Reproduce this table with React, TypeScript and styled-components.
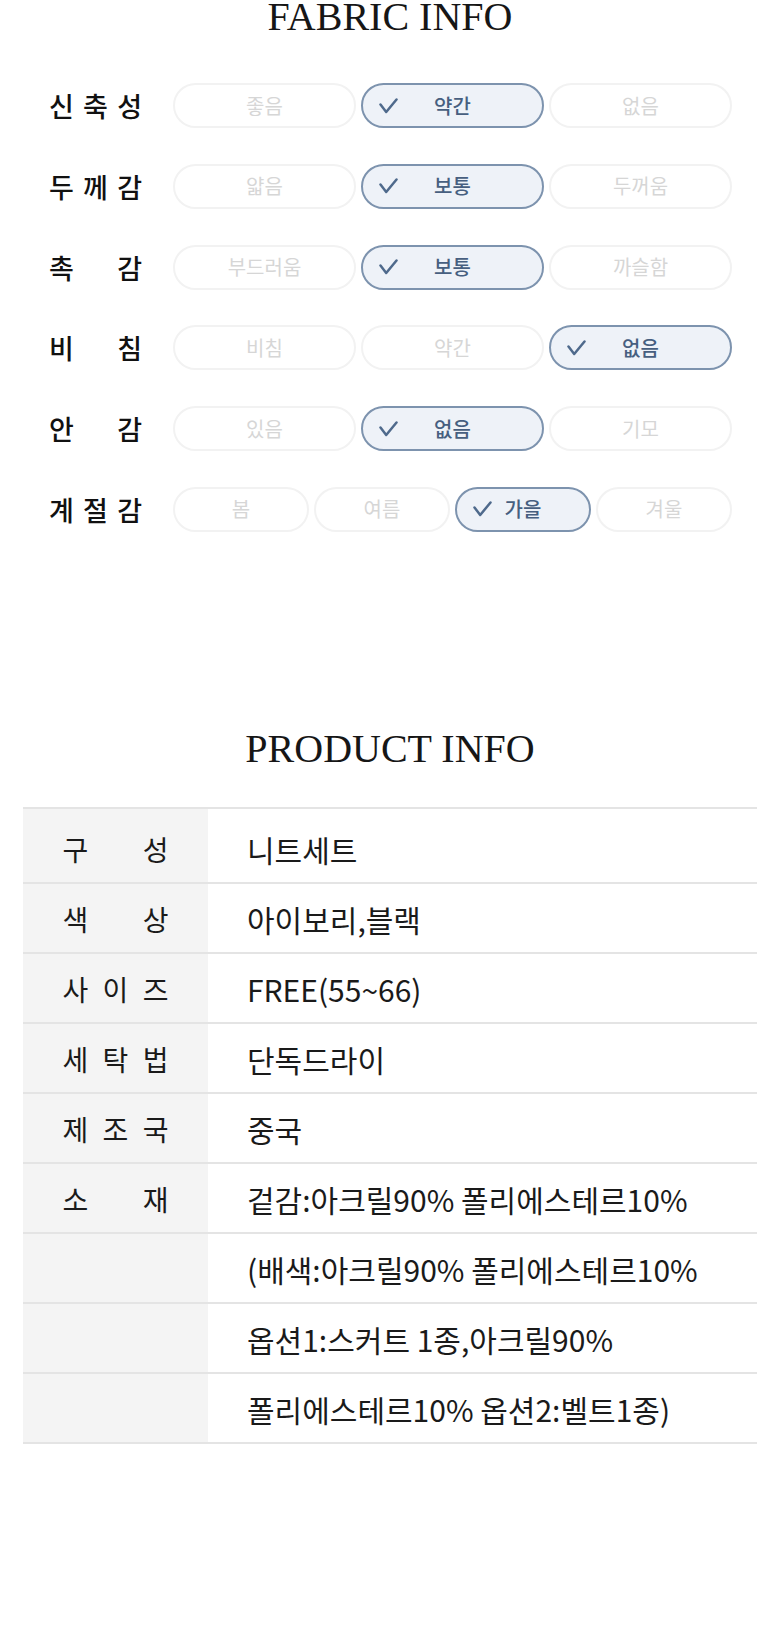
import React from "react";
import styled, { createGlobalStyle } from "styled-components";

const GlobalStyle = createGlobalStyle`
  html, body {
    margin: 0;
    padding: 0;
    background: #ffffff;
  }
  body {
    font-family: "Noto Sans CJK KR", "Noto Sans", sans-serif;
    color: #111;
  }
  * { box-sizing: border-box; }
`;

const Page = styled.div`
  width: 780px;
  min-height: 1631px;
  display: flex;
  flex-direction: column;
  align-items: stretch;
`;

const SectionTitle = styled.h2<{ $top: number }>`
  margin: ${(p) => p.$top}px 0 0;
  font-family: "Liberation Serif", "DejaVu Serif", serif;
  font-weight: 400;
  font-size: 40px;
  line-height: 34px;
  text-align: center;
  color: #161616;
  letter-spacing: 0;
`;

const FabricList = styled.div`
  margin-top: 49px;
  padding: 0 48px 0 49px;
  display: flex;
  flex-direction: column;
  gap: 35.8px;
`;

const FabricRow = styled.div`
  display: grid;
  grid-template-columns: 93px 1fr;
  column-gap: 31px;
  align-items: center;
  height: 45px;
`;

const SpreadLabel = styled.div<{ $size: number; $weight: number; $color: string }>`
  display: flex;
  justify-content: space-between;
  font-size: ${(p) => p.$size}px;
  font-weight: ${(p) => p.$weight};
  color: ${(p) => p.$color};
  line-height: 1;
`;

const Options = styled.div<{ $count: number }>`
  display: grid;
  grid-template-columns: repeat(${(p) => p.$count}, 1fr);
  gap: 5px;
  height: 45px;
`;

const Pill = styled.div<{ $active: boolean }>`
  display: grid;
  grid-template-columns: 1fr auto 1fr;
  align-items: center;
  padding: 0 16px;
  height: 45px;
  border-radius: 23px;
  border: 2px solid ${(p) => (p.$active ? "#7d93ae" : "#f2f2f2")};
  background: ${(p) => (p.$active ? "#eef2f8" : "#ffffff")};
  color: ${(p) => (p.$active ? "#475f80" : "#d6d6d6")};
  font-size: 20px;
  font-weight: ${(p) => (p.$active ? 500 : 400)};
  line-height: 1;
`;

const CheckSlot = styled.span`
  justify-self: start;
  display: flex;
  align-items: center;
`;

const PillText = styled.span`
  white-space: nowrap;
`;

const Table = styled.div`
  margin: 41px 23px 0;
  border-top: 2px solid #e4e4e4;
  display: flex;
  flex-direction: column;
`;

const TRow = styled.div<{ $first?: boolean }>`
  display: grid;
  grid-template-columns: 185px 1fr;
  border-bottom: 2px solid #e4e4e4;
  min-height: ${(p) => (p.$first ? 75 : 70)}px;
`;

const THead = styled.div<{ $first?: boolean }>`
  background: #f4f4f4;
  display: flex;
  align-items: center;
  justify-content: center;
  padding-top: ${(p) => (p.$first ? 7 : 3)}px;
`;

const HeadInner = styled.div`
  width: 106px;
`;

const TCell = styled.div<{ $first?: boolean }>`
  display: flex;
  align-items: center;
  padding: ${(p) => (p.$first ? 7 : 3)}px 0 0 39px;
  font-size: 30px;
  font-weight: 400;
  color: #1a1a1a;
  line-height: 1;
  white-space: nowrap;
`;

const Check = () => (
  <svg width="19" height="16" viewBox="0 0 19 16" fill="none">
    <path
      d="M1.5 6.5 L7.2 14 L17.5 1.5"
      stroke="#4f6a8c"
      strokeWidth="2.5"
      strokeLinecap="round"
      strokeLinejoin="round"
    />
  </svg>
);

const fabric = [
  { label: "신축성", options: ["좋음", "약간", "없음"], sel: 1 },
  { label: "두께감", options: ["얇음", "보통", "두꺼움"], sel: 1 },
  { label: "촉감", options: ["부드러움", "보통", "까슬함"], sel: 1 },
  { label: "비침", options: ["비침", "약간", "없음"], sel: 2 },
  { label: "안감", options: ["있음", "없음", "기모"], sel: 1 },
  { label: "계절감", options: ["봄", "여름", "가을", "겨울"], sel: 2 },
];

const product = [
  { k: "구성", v: "니트세트" },
  { k: "색상", v: "아이보리,블랙" },
  { k: "사이즈", v: "FREE(55~66)" },
  { k: "세탁법", v: "단독드라이" },
  { k: "제조국", v: "중국" },
  { k: "소재", v: "겉감:아크릴90% 폴리에스테르10%" },
  { k: "", v: "(배색:아크릴90% 폴리에스테르10%" },
  { k: "", v: "옵션1:스커트 1종,아크릴90%" },
  { k: "", v: "폴리에스테르10% 옵션2:벨트1종)" },
];

const Spread = ({ text, size, weight, color }: { text: string; size: number; weight: number; color: string }) => (
  <SpreadLabel $size={size} $weight={weight} $color={color}>
    {Array.from(text).map((c, i) => (
      <span key={i}>{c}</span>
    ))}
  </SpreadLabel>
);

export default function App() {
  return (
    <Page>
      <GlobalStyle />
      <SectionTitle $top={0}>FABRIC INFO</SectionTitle>
      <FabricList>
        {fabric.map((row) => (
          <FabricRow key={row.label}>
            <Spread text={row.label} size={27} weight={500} color="#111" />
            <Options $count={row.options.length}>
              {row.options.map((o, i) => (
                <Pill key={o + i} $active={i === row.sel}>
                  <CheckSlot>{i === row.sel ? <Check /> : null}</CheckSlot>
                  <PillText>{o}</PillText>
                  <span />
                </Pill>
              ))}
            </Options>
          </FabricRow>
        ))}
      </FabricList>
      <SectionTitle $top={200}>PRODUCT INFO</SectionTitle>
      <Table>
        {product.map((r, i) => (
          <TRow key={i} $first={i === 0}>
            <THead $first={i === 0}>
              {r.k ? (
                <HeadInner>
                  <Spread text={r.k} size={28} weight={400} color="#1a1a1a" />
                </HeadInner>
              ) : null}
            </THead>
            <TCell $first={i === 0}>{r.v}</TCell>
          </TRow>
        ))}
      </Table>
    </Page>
  );
}
